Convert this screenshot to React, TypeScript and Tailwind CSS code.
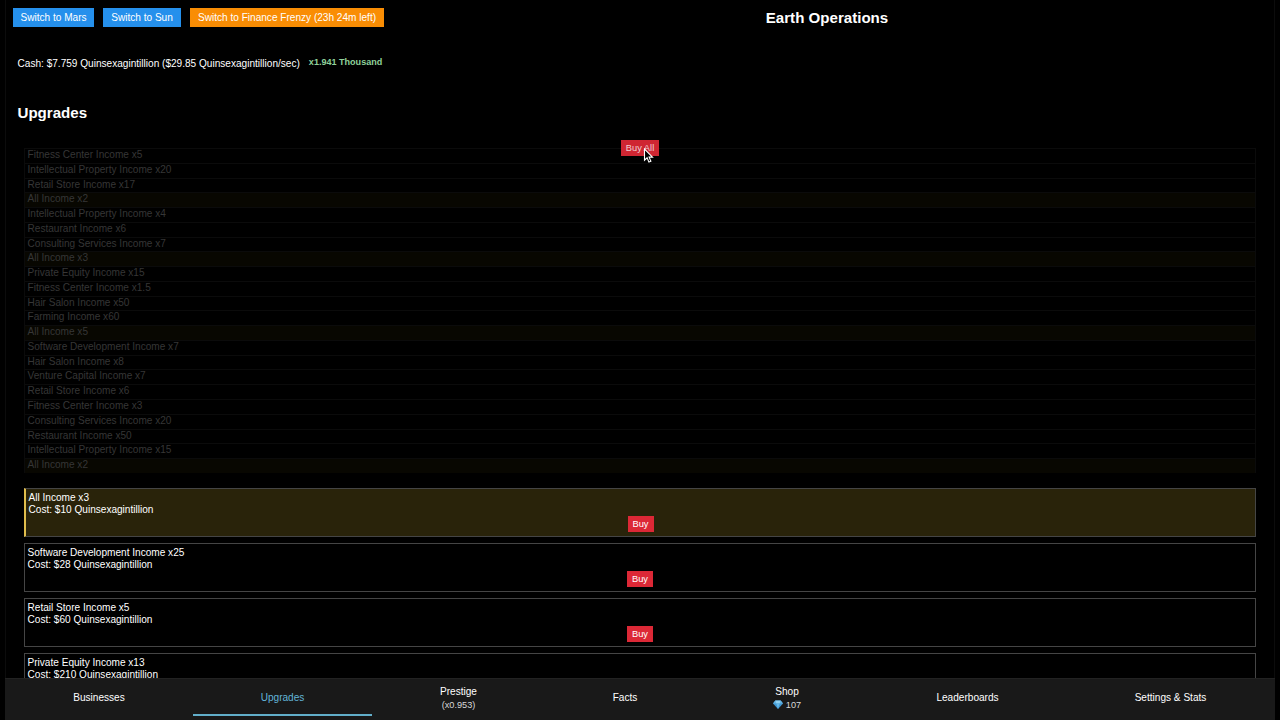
import clsx from 'clsx';

interface Upgrade {
  name: string;
  cost: string;
}

interface NavTab {
  label: string;
  sub?: string;
  gem?: boolean;
  width: string;
}

const PURCHASED = [
  'Fitness Center Income x5',
  'Intellectual Property Income x20',
  'Retail Store Income x17',
  'All Income x2',
  'Intellectual Property Income x4',
  'Restaurant Income x6',
  'Consulting Services Income x7',
  'All Income x3',
  'Private Equity Income x15',
  'Fitness Center Income x1.5',
  'Hair Salon Income x50',
  'Farming Income x60',
  'All Income x5',
  'Software Development Income x7',
  'Hair Salon Income x8',
  'Venture Capital Income x7',
  'Retail Store Income x6',
  'Fitness Center Income x3',
  'Consulting Services Income x20',
  'Restaurant Income x50',
  'Intellectual Property Income x15',
  'All Income x2',
];

const AVAILABLE: Upgrade[] = [
  { name: 'All Income x3', cost: '$10 Quinsexagintillion' },
  { name: 'Software Development Income x25', cost: '$28 Quinsexagintillion' },
  { name: 'Retail Store Income x5', cost: '$60 Quinsexagintillion' },
  { name: 'Private Equity Income x13', cost: '$210 Quinsexagintillion' },
];

const TABS: NavTab[] = [
  { label: 'Businesses', width: 'w-[188px]' },
  { label: 'Upgrades', width: 'w-[179px]' },
  { label: 'Prestige', sub: '(x0.953)', width: 'w-[173px]' },
  { label: 'Facts', width: 'w-[160px]' },
  { label: 'Shop', sub: '107', gem: true, width: 'w-[164px]' },
  { label: 'Leaderboards', width: 'w-[197px]' },
  { label: 'Settings & Stats', width: 'w-[209px]' },
];

const isGlobal = (name: string) => name.startsWith('All Income');

function Gem() {
  return (
    <svg width="10" height="9" viewBox="0 0 18 16">
      <path d="M4 1h10l4 5-9 10L0 6z" fill="#3f97d3" />
      <path d="M4 1l2 5H0zM14 1l-2 5h6z" fill="#63b3e2" />
      <path d="M4 1h10l-2 5H6z" fill="#8fd0f0" />
      <path d="M6 6h6l-3 10z" fill="#66b8e8" />
    </svg>
  );
}

function Cursor() {
  return (
    <svg className="absolute top-[8px] left-[22px]" width="11" height="16" viewBox="0 0 11 16">
      <path d="M1.5 1v11.2l2.6-2.4 1.8 4.3 2-.9-1.8-4.1h3.4z" fill="#000" stroke="#fff" strokeWidth="1.1" />
    </svg>
  );
}

function UpgradeCard({ upgrade }: { upgrade: Upgrade }) {
  const global = isGlobal(upgrade.name);
  return (
    <div
      className={clsx(
        'flex h-[49px] shrink-0 flex-col border border-[#454545] pt-[3px] pl-[2.5px]',
        global && 'border-l-2 border-l-[#e0bd4c] bg-[#29230a]',
      )}
    >
      <div>{upgrade.name}</div>
      <div>Cost: {upgrade.cost}</div>
      <button className="mr-[2.5px] h-4 w-[26px] self-center bg-[#dc2836] text-[9.3px]">Buy</button>
    </div>
  );
}

export default function App() {
  return (
    <div className="flex h-screen w-screen flex-col overflow-hidden bg-black px-[5px] font-['Liberation_Sans',Arial,sans-serif] text-[10.08px] leading-[12px] text-white">
      <div className="flex min-h-0 flex-1 flex-col overflow-hidden border-x border-[#0c0c0c]">
        <header className="flex h-[27px] shrink-0 items-end pl-[7px]">
          <button className="h-[19px] w-[81px] bg-[#2590ec]">Switch to Mars</button>
          <button className="ml-[9px] h-[19px] w-[78px] bg-[#2590ec]">Switch to Sun</button>
          <button className="ml-[9px] h-[19px] w-[194px] bg-[#f98d04]">Switch to Finance Frenzy (23h 24m left)</button>
          <h1 className="flex-1 pr-[4px] text-center text-[15.1px] leading-[19px] font-bold">Earth Operations</h1>
        </header>

        <div className="mt-[31px] flex shrink-0 pl-[11.5px]">
          <span>Cash: $7.759 Quinsexagintillion ($29.85 Quinsexagintillion/sec)</span>
          <span className="ml-[9px] text-[9.05px] leading-[8px] font-bold text-[#8fd19a]">x1.941 Thousand</span>
        </div>

        <h2 className="mt-[34px] shrink-0 pl-[11.5px] text-[15.1px] leading-[18px] font-bold">Upgrades</h2>

        <div className="relative z-10 mt-[18px] h-[8px] shrink-0">
          <div className="relative mx-auto h-4 w-[38px]">
            <button className="h-4 w-[38px] bg-[#cf2632] text-[9.3px] text-[#f0d0d2]">Buy All</button>
            <Cursor />
          </div>
        </div>

        <div className="mx-[18px] shrink-0">
          {PURCHASED.map((name, i) => (
            <div
              key={i}
              className={clsx(
                'h-[14.77px] border-x border-t border-[#0b0b0b] pl-[2.5px] text-[#363636]',
                isGlobal(name) && 'bg-[#080701]',
              )}
            >
              {name}
            </div>
          ))}
        </div>

        <div className="mx-[18px] mt-[15px] flex flex-col gap-[6px]">
          {AVAILABLE.map((u) => (
            <UpgradeCard key={u.name} upgrade={u} />
          ))}
        </div>
      </div>

      <nav className="flex h-[42px] shrink-0 border-t border-[#222] bg-[#191919]">
        {TABS.map((t) => (
          <div
            key={t.label}
            className={clsx(
              'flex h-[37px] shrink-0 flex-col items-center justify-center text-center',
              t.width,
              t.label === 'Upgrades' && 'border-b-2 border-[#62aeca] pt-[2px] text-[#62b5d8]',
            )}
          >
            <div className={clsx(t.sub && 'pt-px')}>{t.label}</div>
            {t.sub && (
              <div className="mt-px flex items-center gap-[3px] text-[9.2px] text-[#d8d8d8]">
                {t.gem && <Gem />}
                {t.sub}
              </div>
            )}
          </div>
        ))}
      </nav>
    </div>
  );
}
